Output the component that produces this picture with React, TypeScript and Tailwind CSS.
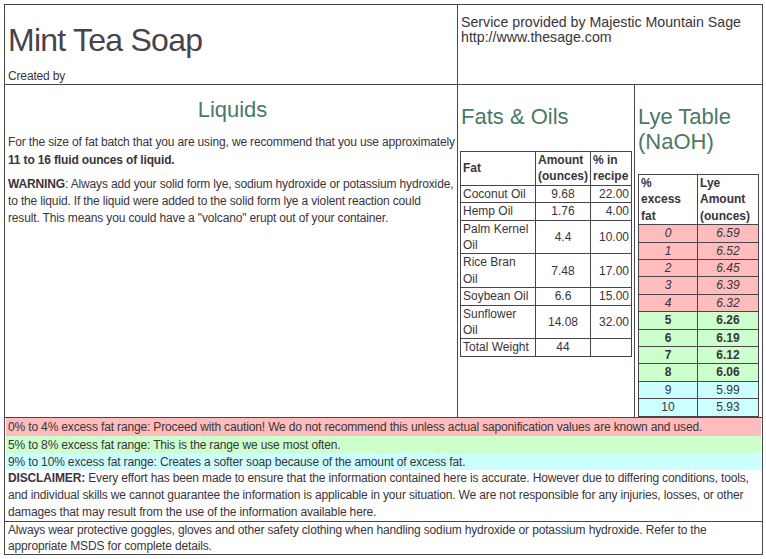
const fats = [
  { name: "Coconut Oil", amount: "9.68", pct: "22.00" },
  { name: "Hemp Oil", amount: "1.76", pct: "4.00" },
  { name: "Palm Kernel Oil", amount: "4.4", pct: "10.00" },
  { name: "Rice Bran Oil", amount: "7.48", pct: "17.00" },
  { name: "Soybean Oil", amount: "6.6", pct: "15.00" },
  { name: "Sunflower Oil", amount: "14.08", pct: "32.00" },
];

const lye = [
  { pct: "0", amt: "6.59" },
  { pct: "1", amt: "6.52" },
  { pct: "2", amt: "6.45" },
  { pct: "3", amt: "6.39" },
  { pct: "4", amt: "6.32" },
  { pct: "5", amt: "6.26" },
  { pct: "6", amt: "6.19" },
  { pct: "7", amt: "6.12" },
  { pct: "8", amt: "6.06" },
  { pct: "9", amt: "5.99" },
  { pct: "10", amt: "5.93" },
];

const lyeRow = (pct: number) => {
  if (pct <= 4) return "bg-[#ffbcbc] italic";
  if (pct <= 8) return "bg-[#ccffcc] font-bold";
  return "bg-[#ccffff]";
};

const td = "border border-[#4a444b] px-[2px] leading-[16.4px] align-middle";

export default function App() {
  return (
    <div className="min-h-screen bg-white p-1 font-['Liberation_Sans',Arial,sans-serif] text-[12px] text-[#3a343b]">
      <div className="grid w-[759px] grid-cols-[452px_176px_127px] grid-rows-[79px_332px_auto_auto] gap-px border border-[#4a444b] bg-[#4a444b]">
        {/* header */}
        <div className="bg-white pl-[3px] pt-[17px]">
          <h1 className="text-[32px] leading-[37px] tracking-[-0.75px] text-[#4a424c]">Mint Tea Soap</h1>
          <p className="mt-[10px] leading-[14px] tracking-[-0.15px]">Created by</p>
        </div>
        <div className="col-span-2 bg-white pl-[3px] pt-[10px] text-[14.2px] leading-[15px]">
          <p>Service provided by Majestic Mountain Sage</p>
          <p>http://www.thesage.com</p>
        </div>

        {/* liquids */}
        <div className="bg-white pl-[3px] pt-[12px] tracking-[-0.15px]">
          <h2 className="text-center text-[22px] leading-[26px] tracking-normal text-[#497a66]">Liquids</h2>
          <p className="mt-[11px] leading-[17.5px]">
            For the size of fat batch that you are using, we recommend that you use approximately{" "}
            <b>11 to 16 fluid ounces of liquid.</b>
          </p>
          <p className="mt-[7px] leading-[17px]">
            <b>WARNING</b>: Always add your solid form lye, sodium hydroxide or potassium hydroxide, to
            the liquid. If the liquid were added to the solid form lye a violent reaction could
            <br />
            result. This means you could have a "volcano" erupt out of your container.
          </p>
        </div>

        {/* fats & oils */}
        <div className="bg-white px-[2px] pt-[19px]">
          <h2 className="pl-px text-[22px] leading-[26px] text-[#497a66]">Fats &amp; Oils</h2>
          <table className="mt-[21px] w-[171px] table-fixed border-collapse">
            <colgroup>
              <col className="w-[75px]" />
              <col className="w-[55px]" />
              <col className="w-[41px]" />
            </colgroup>
            <thead>
              <tr className="font-bold">
                <td className={`${td} text-left`}>Fat</td>
                <td className={`${td} text-left`}>
                  Amount
                  <br />
                  (ounces)
                </td>
                <td className={`${td} text-left`}>
                  % in
                  <br />
                  recipe
                </td>
              </tr>
            </thead>
            <tbody>
              {fats.map((f) => (
                <tr key={f.name}>
                  <td className={td}>{f.name}</td>
                  <td className={`${td} text-center`}>{f.amount}</td>
                  <td className={`${td} text-right`}>{f.pct}</td>
                </tr>
              ))}
              <tr>
                <td className={td}>Total Weight</td>
                <td className={`${td} text-center`}>44</td>
                <td className={td}></td>
              </tr>
            </tbody>
          </table>
        </div>

        {/* lye table */}
        <div className="bg-white px-[3px] pt-[19px]">
          <h2 className="text-[22px] leading-[25px] text-[#497a66]">
            Lye Table
            <br />
            (NaOH)
          </h2>
          <table className="mt-[20px] w-full table-fixed border-collapse">
            <colgroup>
              <col className="w-[59px]" />
              <col />
            </colgroup>
            <thead>
              <tr className="font-bold">
                <td className={`${td} text-left`}>
                  %<br />
                  excess
                  <br />
                  fat
                </td>
                <td className={`${td} text-left`}>
                  Lye
                  <br />
                  Amount
                  <br />
                  (ounces)
                </td>
              </tr>
            </thead>
            <tbody>
              {lye.map((r) => (
                <tr key={r.pct} className={lyeRow(Number(r.pct))}>
                  <td className={`${td} text-center`}>{r.pct}</td>
                  <td className={`${td} text-center`}>{r.amt}</td>
                </tr>
              ))}
            </tbody>
          </table>
        </div>

        {/* ranges + disclaimer */}
        <div className="col-span-3 bg-white px-px tracking-[-0.15px]">
          <div className="h-[18px] bg-[#ffbcbc] pl-[2px] leading-[19px]">
            0% to 4% excess fat range: Proceed with caution! We do not recommend this unless actual
            saponification values are known and used.
          </div>
          <div className="h-[17px] bg-[#ccffcc] pl-[2px] leading-[18px]">
            5% to 8% excess fat range: This is the range we use most often.
          </div>
          <div className="h-[17px] bg-[#ccffff] pl-[2px] leading-[18px]">
            9% to 10% excess fat range: Creates a softer soap because of the amount of excess fat.
          </div>
          <p className="pl-[2px] leading-[17px]">
            <b>DISCLAIMER:</b> Every effort has been made to ensure that the information contained here
            is accurate. However due to differing conditions, tools, and individual skills we cannot
            guarantee the information is applicable in your situation. We are not responsible for any
            injuries, losses, or other damages that may result from the use of the information
            available here.
          </p>
        </div>

        <div className="col-span-3 bg-white pl-[3px] leading-[16px] tracking-[-0.15px]">
          Always wear protective goggles, gloves and other safety clothing when handling sodium
          hydroxide or potassium hydroxide. Refer to the appropriate MSDS for complete details.
        </div>
      </div>
    </div>
  );
}
